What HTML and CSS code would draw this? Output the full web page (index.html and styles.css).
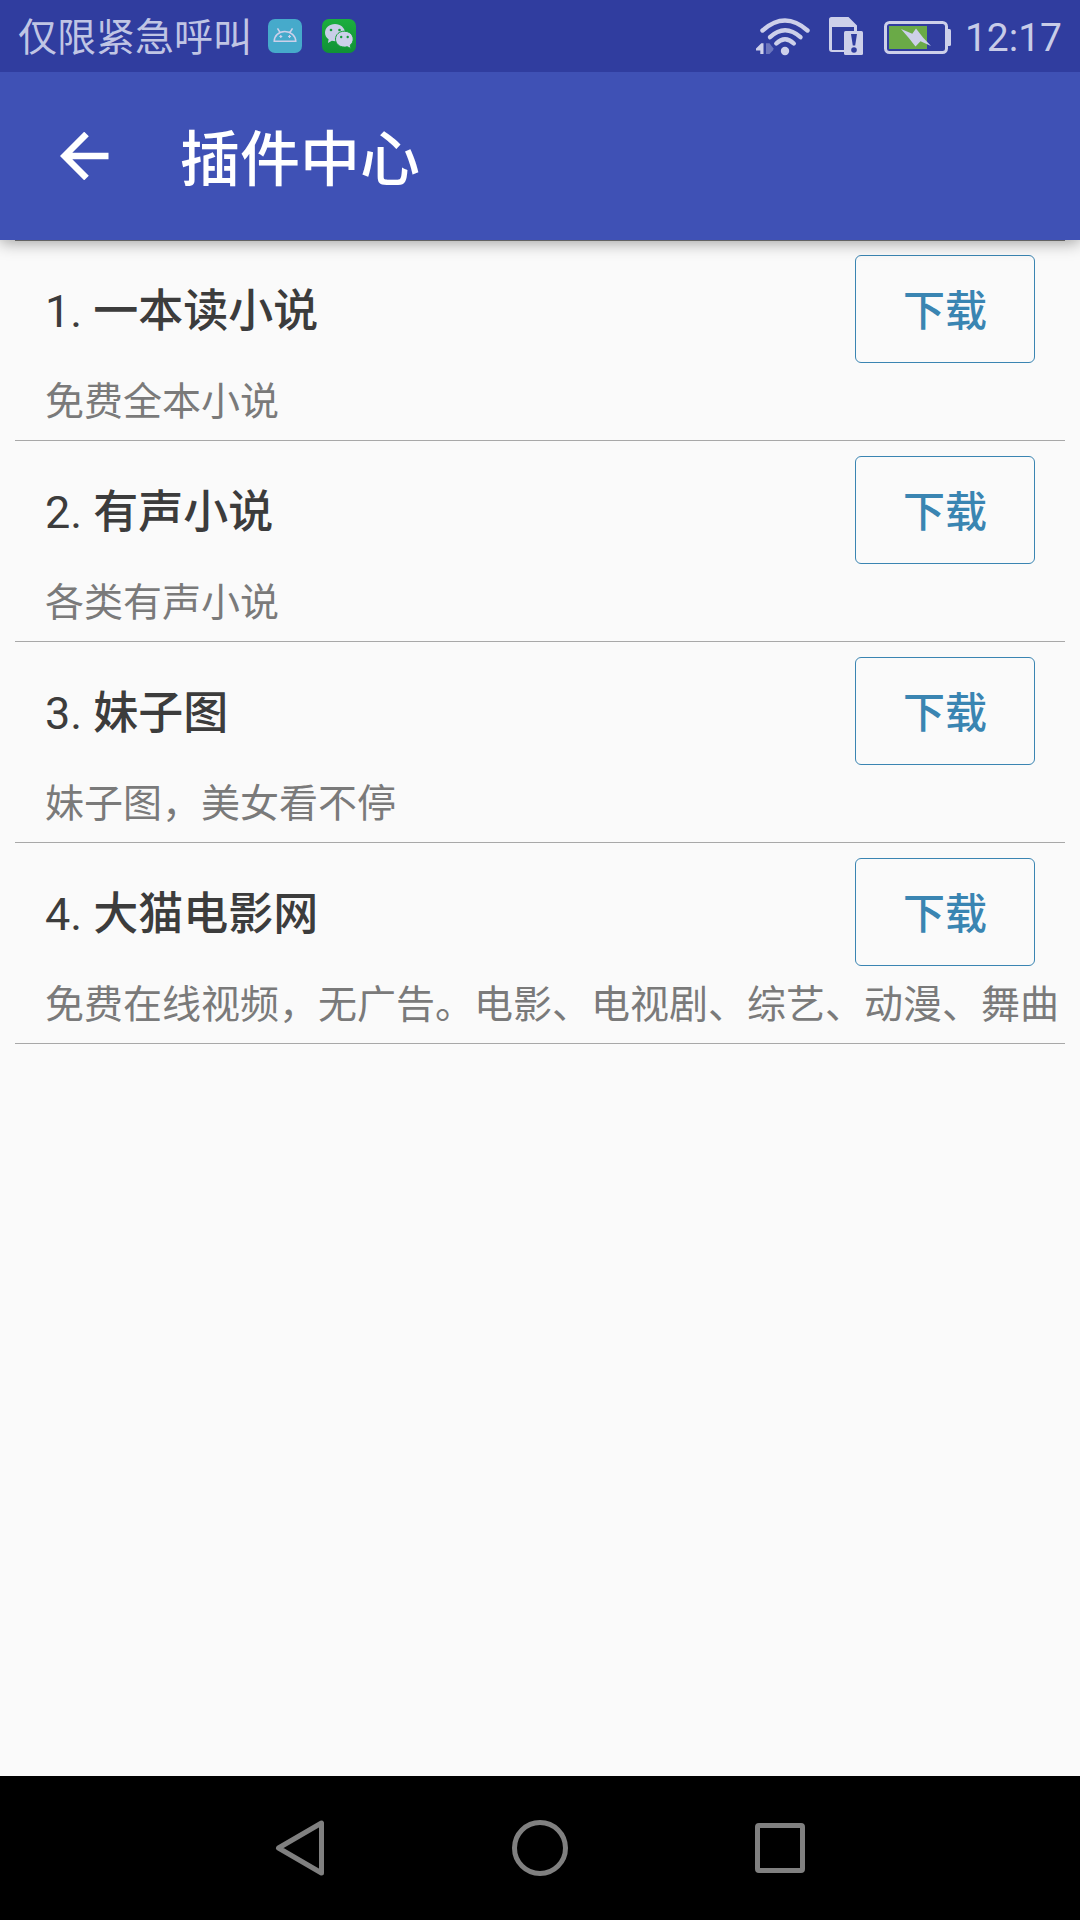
FILE: index.html
```html
<!DOCTYPE html>
<html lang="zh-CN">
<head>
    <meta charset="UTF-8">
    <meta name="viewport" content="width=device-width, initial-scale=1.0">
    <title>插件中心</title>
    <link rel="stylesheet" href="styles.css">
</head>
<body>
    <div class="status-bar">
        <span class="carrier">仅限紧急呼叫</span>
        <svg class="app-icon" width="34" height="34" viewBox="0 0 34 34">
            <rect width="34" height="34" rx="7" fill="#46aacb"/>
            <path d="M6.2 22.300c0-5.500 4.600-9.800 10.600-9.800s11 4.300 11 9.800zM9.500 9.300l2.600 4.200M24.500 9.300l-2.600 4.200" fill="none" stroke="#cdd0ea" stroke-width="1.500"/>
            <path d="M11.300 17.500h3M20 17.500h3M12.800 16v3M21.500 16v3" stroke="#cdd0ea" stroke-width="1.200"/>
        </svg>
        <svg class="app-icon" width="34" height="34" viewBox="0 0 34 34">
            <defs>
                <linearGradient id="green" x1="0" y1="0" x2="0" y2="1">
                    <stop offset="0" stop-color="#1bae3e"/>
                    <stop offset="1" stop-color="#109136"/>
                </linearGradient>
            </defs>
            <rect width="34" height="34" rx="7" fill="url(#green)"/>
            <path d="M13 5C7.300 5 3 8.900 3 13.700c0 2.800 1.400 5 3.600 6.500L5.900 24l4-2.200c1 .3 2 .5 3.100.5 5.700 0 10-3.900 10-8.600S18.700 5 13 5z" fill="#c9cee8"/>
            <path d="M22.300 12.200c-5 0-8.800 3.400-8.800 7.900s3.800 8 8.800 8c1 0 2-.1 2.900-.4l3.700 1.800-.6-3.400c1.800-1.500 2.900-3.600 2.900-6 0-4.500-3.900-7.900-8.900-7.900z" fill="#cdd0ea" stroke="#14a039" stroke-width="1"/>
            <g fill="#149b38">
                <circle cx="9" cy="11" r="1.300"/>
                <circle cx="17.500" cy="11" r="1.300"/>
                <circle cx="19.200" cy="18" r="1.200"/>
                <circle cx="25.700" cy="18" r="1.200"/>
            </g>
        </svg>

        <div class="indicators">
            <svg class="wifi" width="56" height="40" viewBox="0 0 56 40">
                <g fill="none" stroke="#cdd0ea" stroke-width="4.400" stroke-linecap="round">
                    <path d="M6.500 13.500Q29-6.500 51.500 13.500"/>
                    <path d="M14 20.200Q29 6.400 44.500 20.200"/>
                    <path d="M20.300 26.500Q29 18 37.800 26.500"/>
                </g>
                <circle cx="29" cy="34" r="4.200" fill="#cdd0ea"/>
                <path d="M7.500 26.300V37H4.300V33.600H0V31.600L5.300 26.300z" fill="#cdd0ea"/>
                <path d="M10 26.300h3.500l3.800 5v1.600l-3.800 4.100H10z" fill="#6c76bd"/>
            </svg>
            <svg class="sim" width="35" height="40" viewBox="0 0 35 40">
                <path d="M2.500 0H19.500L28 8.500V14H25V10H3V33H15V35H3Q0 35 0 32V2.500Q0 0 2.500 0z" fill="#cdd0ea"/>
                <rect x="15" y="14" width="19" height="24" rx="1.500" fill="#cdd0ea"/>
                <path d="M22 17h6l-1.800 11.500h-2.400z" fill="#303d9f"/>
                <circle cx="25" cy="33" r="2.800" fill="#303d9f"/>
            </svg>
            <svg class="battery" width="68" height="34" viewBox="0 0 68 34">
                <rect x="1.500" y="1.500" width="61" height="30" rx="4" fill="none" stroke="#cdd0ea" stroke-width="3"/>
                <path d="M63 8h2.500q1.500 0 1.500 1.500V23.500q0 1.500-1.500 1.500H63z" fill="#cdd0ea"/>
                <rect x="5" y="5" width="38" height="23" fill="#6aaa47"/>
                <path d="M17 8L28.300 12.800L32 7.500L39.200 16.800L47 25L36.500 20.200L31.500 25.500L25 17.200z" fill="#cdd0ea"/>
            </svg>
            <span class="clock">12:17</span>
        </div>
    </div>

    <header class="app-bar">
        <svg class="back" width="49" height="48" viewBox="0 0 49 48" fill="none" stroke="#fff" stroke-width="6.500">
            <path d="M48.500 24H5M26.500 2L4.500 24L26.500 46"/>
        </svg>
        <h1>插件中心</h1>
    </header>

    <main class="plugin-list">
        <div class="plugin">
            <div class="plugin-head">
                <h2><span>1. </span>一本读小说</h2>
                <button>下载</button>
            </div>
            <p>免费全本小说</p>
        </div>
        <div class="plugin">
            <div class="plugin-head">
                <h2><span>2. </span>有声小说</h2>
                <button>下载</button>
            </div>
            <p>各类有声小说</p>
        </div>
        <div class="plugin">
            <div class="plugin-head">
                <h2><span>3. </span>妹子图</h2>
                <button>下载</button>
            </div>
            <p>妹子图，美女看不停</p>
        </div>
        <div class="plugin">
            <div class="plugin-head">
                <h2><span>4. </span>大猫电影网</h2>
                <button>下载</button>
            </div>
            <p>免费在线视频，无广告。电影、电视剧、综艺、动漫、舞曲</p>
        </div>
    </main>

    <nav class="nav-bar">
        <svg width="60" height="60" viewBox="0 0 60 60">
            <path d="M8.500 30L51.500 5V55z"/>
        </svg>
        <svg width="60" height="60" viewBox="0 0 60 60">
            <circle cx="30" cy="30" r="25.500"/>
        </svg>
        <svg width="60" height="60" viewBox="0 0 60 60">
            <rect x="7.500" y="7.500" width="45" height="45" rx="1.500"/>
        </svg>
    </nav>
</body>
</html>
```

FILE: styles.css
```css
* {
    box-sizing: border-box;
    margin: 0;
    padding: 0;
}
body {
    display: flex;
    flex-direction: column;
    height: 1920px;
    overflow: hidden;
    font-family: Roboto, "Noto Sans CJK SC", sans-serif;
    background: #fafafa;
    color: #3c3c3c;
}
svg {
    display: block;
    flex: none;
}

/* status bar */
.status-bar {
    display: flex;
    align-items: center;
    height: 72px;
    padding: 0 18px;
    background: #303d9f;
    color: #c0c5e4;
    font-size: 39px;
    line-height: 72px;
    position: relative;
    z-index: 2;
}
.carrier {
    width: 250px;
    padding-top: 4px;
    white-space: nowrap;
}
.app-icon {
    margin-right: 20px;
}
.indicators {
    display: flex;
    margin-left: auto;
    height: 72px;
}
.wifi {
    margin: 17px 17px 0 0;
}
.sim {
    margin: 17px 20px 0 0;
}
.battery {
    margin: 21px 13px 0 0;
}
.clock {
    padding-top: 2px;
    color: #c8cce8;
}

/* app bar */
.app-bar {
    display: flex;
    align-items: center;
    height: 168px;
    padding: 0 60px;
    background: #3f51b5;
    color: #fff;
    box-shadow: 0 2px 16px rgba(0, 0, 0, 0.4);
    z-index: 1;
}
.back {
    margin-right: 71px;
}
.app-bar h1 {
    padding-bottom: 4px;
    font-size: 60px;
    font-weight: 500;
}

/* plugin list */
.plugin-list {
    flex: 1;
    padding: 0 15px;
}
.plugin {
    height: 201px;
    padding: 15px 0 0 30px;
    border-bottom: 1px solid #a8a8a8;
}
.plugin:first-child {
    padding-top: 14px;
    border-top: 1px solid #808080;
}
.plugin-head {
    display: flex;
    justify-content: space-between;
    padding-right: 30px;
}
.plugin h2 {
    height: 108px;
    padding-top: 3px;
    font-size: 45px;
    font-weight: 500;
    line-height: 108px;
}
.plugin h2 span {
    font-weight: 400;
}
.plugin button {
    width: 180px;
    height: 108px;
    padding-bottom: 3px;
    border: 1px solid #3a85b2;
    border-radius: 6px;
    background: transparent;
    color: #3a85b2;
    font-family: inherit;
    font-size: 42px;
    font-weight: 500;
}
.plugin p {
    padding-top: 2px;
    color: #7a7a7a;
    font-size: 39px;
    line-height: 75px;
    white-space: nowrap;
}

/* navigation bar */
.nav-bar {
    display: flex;
    justify-content: center;
    align-items: center;
    gap: 180px;
    height: 144px;
    background: #000;
}
.nav-bar svg {
    fill: none;
    stroke: #808080;
    stroke-width: 5;
    stroke-linejoin: round;
}
```
